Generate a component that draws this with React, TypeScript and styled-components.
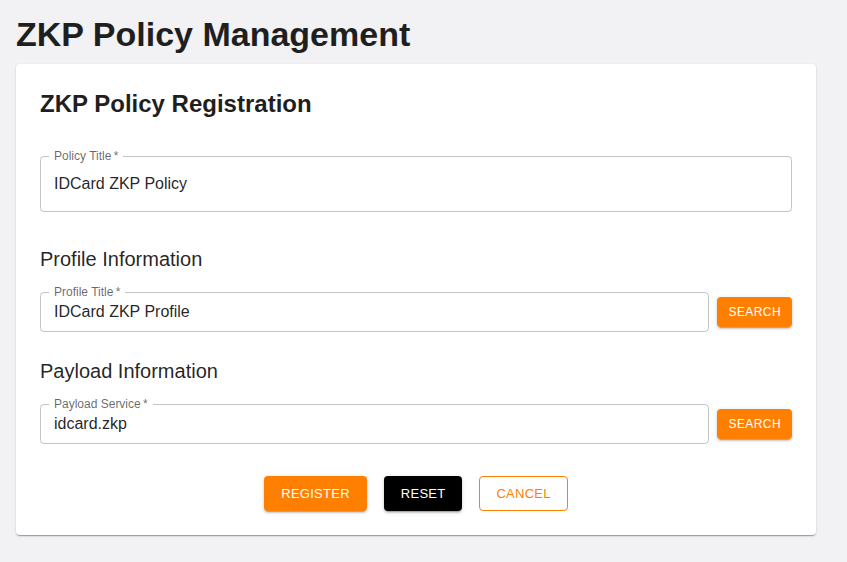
import React from "react";
import styled, { createGlobalStyle } from "styled-components";

const GlobalStyle = createGlobalStyle`
  * { box-sizing: border-box; }
  html, body {
    margin: 0;
    padding: 0;
    background: #f2f2f4;
    font-family: "Liberation Sans", Arial, Helvetica, sans-serif;
    color: rgba(0, 0, 0, 0.87);
  }
`;

const Page = styled.main`
  padding: 13px 16px 16px;
  display: flex;
  flex-direction: column;
  align-items: flex-start;
`;

const PageTitle = styled.h1`
  margin: 0 0 9px;
  font-size: 34px;
  line-height: 42px;
  font-weight: 700;
  color: #1f1f1f;
`;

const Card = styled.section`
  width: 800px;
  background: #fff;
  border-radius: 4px;
  box-shadow: 0 2px 1px -1px rgba(0, 0, 0, 0.2), 0 1px 1px 0 rgba(0, 0, 0, 0.14),
    0 1px 3px 0 rgba(0, 0, 0, 0.12);
  padding: 24px 24px 24px;
  display: flex;
  flex-direction: column;
`;

const CardTitle = styled.h2`
  margin: 0 0 36px;
  font-size: 24px;
  line-height: 32px;
  font-weight: 700;
  color: #1f1f1f;
`;

const SectionTitle = styled.h3`
  margin: 0 0 17px;
  font-size: 20px;
  line-height: 32px;
  font-weight: 400;
  color: rgba(0, 0, 0, 0.87);
`;

const FieldRow = styled.div<{ $gap: number }>`
  display: flex;
  align-items: center;
  gap: 8px;
  margin-bottom: ${(p) => p.$gap}px;
`;

const Outline = styled.div<{ $h: number }>`
  position: relative;
  flex: 1;
  height: ${(p) => p.$h}px;
  border: 1px solid rgba(0, 0, 0, 0.23);
  border-radius: 4px;
  display: flex;
  align-items: center;
`;

const FloatLabel = styled.label`
  position: absolute;
  top: -8px;
  left: 8px;
  padding: 0 5px;
  background: #fff;
  font-size: 12px;
  line-height: 14px;
  color: rgba(0, 0, 0, 0.6);
  white-space: nowrap;
`;

const Input = styled.input`
  flex: 1;
  width: 100%;
  height: 100%;
  border: none;
  outline: none;
  background: transparent;
  padding: 0 13px;
  font-family: inherit;
  font-size: 16px;
  color: rgba(0, 0, 0, 0.87);
`;

const Button = styled.button<{ $variant: "orange" | "black" | "outline"; $small?: boolean }>`
  font-family: "Liberation Sans", Arial, sans-serif;
  font-size: ${(p) => (p.$small ? "12px" : "13px")};
  text-transform: uppercase;
  letter-spacing: ${(p) => (p.$small ? "0.035em" : "0.02em")};
  border-radius: 4px;
  cursor: pointer;
  height: ${(p) => (p.$small ? "30px" : "35px")};
  padding: ${(p) => (p.$small ? "0 10px" : "0 16px")};
  min-width: 64px;
  border: 1px solid
    ${(p) => (p.$variant === "outline" ? "#ff7f00" : "transparent")};
  background: ${(p) =>
    p.$variant === "orange" ? "#ff7f00" : p.$variant === "black" ? "#000" : "#fff"};
  color: ${(p) => (p.$variant === "outline" ? "#ff7f00" : "#fff")};
  box-shadow: ${(p) =>
    p.$variant === "outline"
      ? "none"
      : "0 3px 1px -2px rgba(0,0,0,0.2), 0 2px 2px 0 rgba(0,0,0,0.14), 0 1px 5px 0 rgba(0,0,0,0.12)"};
  flex-shrink: 0;
`;

const Actions = styled.div`
  display: flex;
  justify-content: center;
  gap: 17px;
`;

type FieldProps = { label: string; value: string; height: number };

const Field = ({ label, value, height }: FieldProps) => (
  <Outline $h={height}>
    <FloatLabel>{label}&thinsp;*</FloatLabel>
    <Input defaultValue={value} />
  </Outline>
);

export default function App() {
  return (
    <>
      <GlobalStyle />
      <Page>
        <PageTitle>ZKP Policy Management</PageTitle>
        <Card>
          <CardTitle>ZKP Policy Registration</CardTitle>
          <FieldRow $gap={31}>
            <Field label="Policy Title" value="IDCard ZKP Policy" height={56} />
          </FieldRow>
          <SectionTitle>Profile Information</SectionTitle>
          <FieldRow $gap={23}>
            <Field label="Profile Title" value="IDCard ZKP Profile" height={40} />
            <Button $variant="orange" $small>Search</Button>
          </FieldRow>
          <SectionTitle>Payload Information</SectionTitle>
          <FieldRow $gap={32}>
            <Field label="Payload Service" value="idcard.zkp" height={40} />
            <Button $variant="orange" $small>Search</Button>
          </FieldRow>
          <Actions>
            <Button $variant="orange">Register</Button>
            <Button $variant="black">Reset</Button>
            <Button $variant="outline">Cancel</Button>
          </Actions>
        </Card>
      </Page>
    </>
  );
}
